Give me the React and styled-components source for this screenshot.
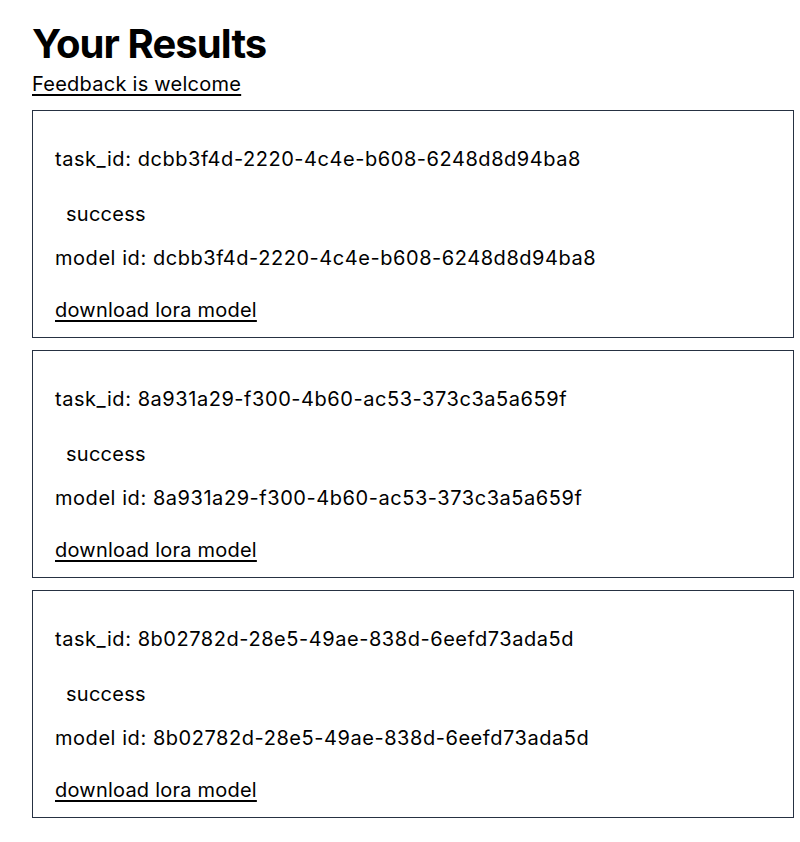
import React from "react";
import styled, { createGlobalStyle } from "styled-components";

const Global = createGlobalStyle`
  html, body { margin: 0; padding: 0; background: #fff; }
  body { font-family: Inter, "Noto Sans", sans-serif; color: #000; }
`;

const Page = styled.main`
  padding: 24px 6px 24px 32px;
  display: flex;
  flex-direction: column;
`;

const Title = styled.h1`
  margin: 0;
  font-size: 40px;
  line-height: 40px;
  font-weight: 700;
  letter-spacing: -0.9px;
  color: #000;
`;

const FeedbackLink = styled.a`
  margin-top: 6px;
  align-self: flex-start;
  font-size: 20px;
  line-height: 28px;
  letter-spacing: 0.25px;
  color: #000;
  text-decoration: underline;
  text-underline-offset: 3px;
`;

const List = styled.div`
  margin-top: 12px;
  display: flex;
  flex-direction: column;
  gap: 12px;
`;

const Card = styled.section`
  border: 1px solid #263142;
  padding: 12px 22px 13px;
  display: flex;
  flex-direction: column;
  align-items: flex-start;
`;

const Line = styled.div`
  font-size: 20px;
  line-height: 28px;
  letter-spacing: ${(p) => p.$ls ?? 0.25}px;
  color: #000;
  margin-top: ${(p) => p.$mt}px;
  padding-left: ${(p) => p.$indent || 0}px;
`;

const Download = styled.a`
  margin-top: 24px;
  font-size: 20px;
  line-height: 28px;
  letter-spacing: 0.22px;
  color: #000;
  text-decoration: underline;
  text-underline-offset: 3px;
`;

const results = [
  "dcbb3f4d-2220-4c4e-b608-6248d8d94ba8",
  "8a931a29-f300-4b60-ac53-373c3a5a659f",
  "8b02782d-28e5-49ae-838d-6eefd73ada5d",
];

export default function App() {
  return (
    <>
      <Global />
      <Page>
        <Title>Your Results</Title>
        <FeedbackLink href="#">Feedback is welcome</FeedbackLink>
        <List>
          {results.map((id) => (
            <Card key={id}>
              <Line $mt={22} $ls={0.55}>task_id: {id}</Line>
              <Line $mt={27} $indent={11}>success</Line>
              <Line $mt={16} $ls={0.55}>model id: {id}</Line>
              <Download href="#">download lora model</Download>
            </Card>
          ))}
        </List>
      </Page>
    </>
  );
}
